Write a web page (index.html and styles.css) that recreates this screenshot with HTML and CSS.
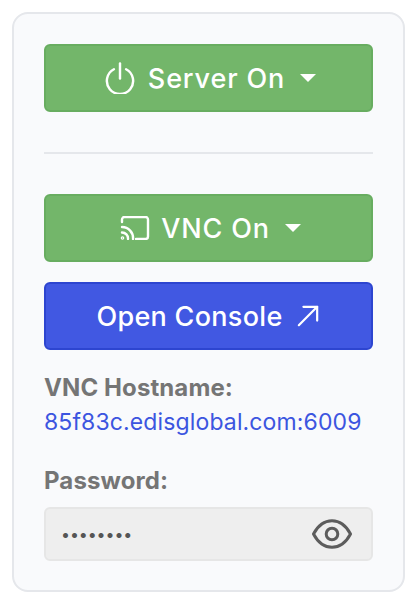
FILE: index.html
```html
<!DOCTYPE html>
<html lang="en">
<head>
<meta charset="utf-8">
<title>VNC</title>
<link rel="stylesheet" href="styles.css">
</head>
<body>
<main class="card">
  <button class="btn green wide"><svg class="ic-power" viewBox="0 0 32 34" fill="none" stroke="currentColor" stroke-width="2.6" stroke-linecap="round"><path d="M16 2v16"/><path d="M9.500 8.200a14 14 0 1 0 13 0"/></svg><span>Server On</span><i class="caret"></i></button>
  <hr class="divider">
  <button class="btn green wide"><svg class="ic-cast" viewBox="0 0 30 24" fill="none" stroke="currentColor" stroke-width="2.400" stroke-linecap="round" stroke-linejoin="round"><path d="M2 6V3.500A2.500 2.500 0 0 1 4.500 1h21A2.500 2.500 0 0 1 28 3.500v17a2.500 2.500 0 0 1-2.500 2.500H16"/><path d="M2 11a11 11 0 0 1 11 12"/><path d="M2 16.500a6 6 0 0 1 6 6.500"/><circle cx="2.500" cy="22" r=".6"/></svg><span>VNC On</span><i class="caret"></i></button>
  <button class="btn blue"><span>Open Console</span><svg class="ic-arrow" viewBox="0 0 24 24" fill="none" stroke="currentColor" stroke-width="2.400" stroke-linecap="round" stroke-linejoin="round"><path d="M2 22 22 2"/><path d="M7 2h15v15"/></svg></button>
  <div class="label first">VNC Hostname:</div>
  <a class="host" href="#">85f83c.edisglobal.com:6009</a>
  <div class="label second">Password:</div>
  <div class="field">
    <span class="dots">••••••••</span>
    <svg class="ic-eye" viewBox="0 0 40 30" fill="none" stroke="currentColor" stroke-width="3" stroke-linejoin="round"><path d="M1.500 15C6 6.500 13 1.800 20 1.800S34 6.500 38.500 15C34 23.500 27 28.200 20 28.200S6 23.500 1.500 15Z"/><circle cx="20" cy="15" r="5.800"/></svg>
  </div>
</main>
</body>
</html>
```
FILE: styles.css
```css
* { box-sizing: border-box; }
html, body { margin: 0; background: #fff; }
body { padding: 12px 11px 18px 12px; font-family: "Inter", "Lato", sans-serif; width: 416px; height: 610px; overflow: hidden; }
.card {
  display: flex; flex-direction: column;
  height: 580px;
  padding: 30px 30px 0;
  background: #f9fafc;
  border: 2px solid #e5e7eb;
  border-radius: 16px;
}
.btn {
  display: flex; align-items: center; justify-content: center;
  height: 68px; width: 100%; padding: 0;
  border-radius: 6px; border: 2px solid;
  color: #fff; font: 500 27px "Inter", sans-serif;
  letter-spacing: .3px;
}
.wide { letter-spacing: .85px; padding-left: 4px; }
.green { background: #73b66a; border-color: #68ad60; }
.blue { background: #4158e2; border-color: #2d45d0; margin-top: 20px; padding-right: 2px; }
.caret {
  width: 0; height: 0; margin-left: 15px; margin-top: -1px;
  border-left: 8px solid transparent; border-right: 8px solid transparent; border-top: 8px solid #fff;
}
.ic-power { width: 30px; height: 33px; margin-right: 13px; margin-top: -1px; }
.ic-cast { width: 30px; height: 24px; margin-right: 11px; }
.ic-arrow { width: 22px; height: 22px; margin-left: 14px; }
.divider { height: 2px; width: 100%; margin: 40px 0; border: 0; background: #e5e7eb; flex: none; }
.label { font-size: 24px; line-height: 28px; font-weight: 700; color: #757575; letter-spacing: .1px; white-space: nowrap; }
.label.first { margin-top: 24px; }
.label.second { margin-top: 31px; }
.host { margin-top: 6px; font-size: 23px; line-height: 28px; letter-spacing: .13px; color: #3c55e0; text-decoration: none; white-space: nowrap; }
.field {
  display: flex; align-items: center; justify-content: space-between;
  height: 54px; margin-top: 12px; padding: 0 19px 0 15px;
  background: #eeeeee; border: 2px solid #e6e6e6; border-radius: 6px;
}
.dots { font-size: 16px; letter-spacing: -.1px; color: #555; }
.ic-eye { width: 40px; height: 30px; color: #5c5c5c; }
```
